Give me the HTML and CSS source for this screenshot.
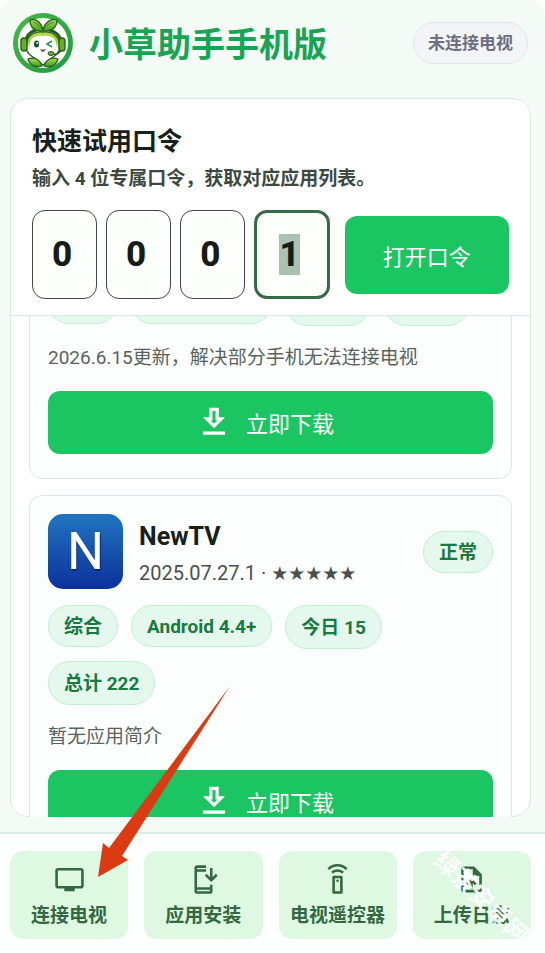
FILE: index.html
```html
<!DOCTYPE html>
<html lang="zh-CN">
<head>
<meta charset="utf-8">
<meta name="viewport" content="width=device-width, initial-scale=1">
<title>小草助手手机版</title>
<link rel="stylesheet" href="styles.css">
</head>
<body>
<svg class="defs" aria-hidden="true">
  <symbol id="download" viewBox="0 0 24 24"><path d="M19 9h-4V3H9v6H5l7 7 7-7zm-8 2V5h2v6h1.17L12 13.17 9.83 11H11zm-6 7h14v2H5z"/></symbol>
</svg>
<div class="app">
  <header class="header">
    <svg class="logo" viewBox="0 0 60 60" aria-hidden="true">
      <defs>
        <linearGradient id="ring" x1="0" y1="0" x2="1" y2="1"><stop offset="0" stop-color="#46b944"/><stop offset="1" stop-color="#219a45"/></linearGradient>
        <linearGradient id="leaf" x1="0" y1="0" x2="0" y2="1"><stop offset="0" stop-color="#a5e04a"/><stop offset="1" stop-color="#3f9b23"/></linearGradient>
        <linearGradient id="cap" x1="0" y1="0" x2="0" y2="1"><stop offset="0" stop-color="#b9dd4c"/><stop offset=".3" stop-color="#9ccb3b"/><stop offset=".5" stop-color="#fff"/></linearGradient>
      </defs>
      <circle cx="30" cy="30" r="27.5" fill="#fff" stroke="url(#ring)" stroke-width="5"/>
      <path d="M13 28C14 12 45 12 48 28" fill="none" stroke="#235f1c" stroke-width="3"/>
      <path d="M30 19c10-1 17 5 17 14 0 7-5 10-10 13-4 2-5 5-7 6-2-1-3-4-7-6-5-3-10-6-10-13 0-9 7-15 17-14z" fill="url(#cap)" stroke="#285f1d" stroke-width="1.3"/>
      <path d="M17 30c1-6 7-8 13-7 6-1 12 1 13 7 1 9-6 12-13 13-7-1-14-4-13-13z" fill="#fff"/>
      <path d="M30 18C29 9 22 5 17 7c0 8 5 12 13 11zM30 18C31 9 39 5 44 7c0 8-6 12-14 11z" fill="url(#leaf)" stroke="#285f1d" stroke-width="1.3"/>
      <path d="M20 9q7 2 10 9 3-7 11-9" fill="none" stroke="#39781c" stroke-width=".8"/>
      <rect x="8" y="25" width="6" height="13" rx="3" fill="#69ad2f" stroke="#285f1d" stroke-width="1.4"/>
      <rect x="46" y="25" width="6" height="13" rx="3" fill="#69ad2f" stroke="#285f1d" stroke-width="1.4"/>
      <path d="M48 37q-2 5-9 4" fill="none" stroke="#285f1d" stroke-width="1.5"/>
      <ellipse cx="38" cy="40.500" rx="3" ry="2" fill="#6fb02f" stroke="#285f1d"/>
      <ellipse cx="23.500" cy="31" rx="2.500" ry="3.500" fill="#194e2f"/><circle cx="24.200" cy="30" r=".9" fill="#fff"/>
      <path d="M39 28l-5 3 5 3" fill="none" stroke="#2a9a4c" stroke-width="1.6"/>
      <path d="M27 36q3 1 6 0-1 3-3 3t-3-3z" fill="#8a4a33"/>
      <path d="M29 53c-3-8-9-9-14-7 2 7 8 9 14 7zM31 53c3-8 9-9 14-7-2 7-8 9-14 7z" fill="url(#leaf)" stroke="#285f1d" stroke-width="1.3"/>
    </svg>
    <h1 class="title">小草助手手机版</h1>
    <span class="connection">未连接电视</span>
  </header>

  <main class="panel">
    <form class="code">
      <h2 class="code-title">快速试用口令</h2>
      <p class="code-hint">输入 4 位专属口令，获取对应应用列表。</p>
      <div class="code-row">
        <input class="digit" aria-label="口令第 1 位" value="0" maxlength="1">
        <input class="digit" aria-label="口令第 2 位" value="0" maxlength="1">
        <input class="digit" aria-label="口令第 3 位" value="0" maxlength="1">
        <input class="digit digit-active" aria-label="口令第 4 位" value="1" maxlength="1">
        <button class="open" type="button">打开口令</button>
      </div>
    </form>

    <div class="list">
      <article class="card card-scrolled">
        <div class="chips">
          <span class="chip">综合</span><span class="chip">Android 4.4+</span><span class="chip chip-count">今日 5</span><span class="chip chip-count">总计 5</span>
        </div>
        <p class="desc">2026.6.15更新，解决部分手机无法连接电视</p>
        <button class="download" type="button"><svg class="download-icon" aria-hidden="true"><use href="#download"/></svg>立即下载</button>
      </article>
      <article class="card">
        <div class="app-head">
          <div class="app-icon" aria-hidden="true">N</div>
          <div class="app-info">
            <h3 class="app-name">NewTV</h3>
            <p class="app-meta">2025.07.27.1 · <span class="stars">★★★★★</span></p>
          </div>
          <span class="chip">正常</span>
        </div>
        <div class="chips">
          <span class="chip">综合</span><span class="chip">Android 4.4+</span><span class="chip chip-count">今日 15</span><span class="chip chip-count">总计 222</span>
        </div>
        <p class="desc">暂无应用简介</p>
        <button class="download" type="button"><svg class="download-icon" aria-hidden="true"><use href="#download"/></svg>立即下载</button>
      </article>
    </div>
  </main>

  <nav class="nav">
    <button class="nav-item" type="button">
      <svg class="nav-icon" viewBox="0 0 24 24" aria-hidden="true"><path d="M21 3H3c-1.100 0-2 .9-2 2v12c0 1.100.9 2 2 2h5v2h8v-2h5c1.100 0 2-.9 2-2V5c0-1.100-.9-2-2-2zm0 14H3V5h18v12z"/></svg>
      连接电视
    </button>
    <button class="nav-item" type="button">
      <svg class="nav-icon" viewBox="0 0 24 24" aria-hidden="true"><path d="M17 18H7V6h7V1H7C5.900 1 5 1.900 5 3v18c0 1.100.9 2 2 2h10c1.100 0 2-.9 2-2v-5h-2v2zm0 3H7v-1h10v1zM7 3h7v1H7V3z"/><path d="M18 14l5-5-1.410-1.410L19 10.170V3h-2v7.170l-2.590-2.580L13 9z"/></svg>
      应用安装
    </button>
    <button class="nav-item" type="button">
      <svg class="nav-icon" viewBox="0 0 24 24" aria-hidden="true"><path d="M15 9H9c-.55 0-1 .45-1 1v12c0 .55.45 1 1 1h6c.55 0 1-.45 1-1V10c0-.55-.45-1-1-1zm-1 12h-4V11h4v10z"/><circle cx="12" cy="13" r="1"/><path d="M7.050 6.050l1.410 1.410C9.370 6.560 10.620 6 12 6s2.630.56 3.540 1.460l1.410-1.410C15.680 4.780 13.930 4 12 4s-3.680.78-4.950 2.050zM12 0C8.960 0 6.210 1.230 4.220 3.220l1.410 1.410C7.260 3.010 9.510 2 12 2s4.740 1.010 6.360 2.640l1.410-1.410C17.790 1.230 15.040 0 12 0z"/></svg>
      电视遥控器
    </button>
    <button class="nav-item" type="button">
      <svg class="nav-icon" viewBox="0 0 24 24" aria-hidden="true"><path d="M14 2H6c-1.100 0-2 .9-2 2v16c0 1.100.9 2 2 2h12c1.100 0 2-.9 2-2V8l-6-6zm4 18H6V4h7v5h5v11zM8 15l1.410 1.410L11 14.840V19h2v-4.160l1.590 1.590L16 15l-4-4z"/></svg>
      上传日志
    </button>
    <span class="watermark">绿茶安卓网</span>
  </nav>

  <svg class="arrow" viewBox="0 0 132 192" aria-hidden="true"><path d="M132 0L24 170l6 4L0 191 5 157l6 5z"/></svg>
</div>
</body>
</html>
```
FILE: styles.css
```css
* { box-sizing: border-box; }

body {
  margin: 0;
  background: #fbfefc;
  color: #17201a;
  font-family: Roboto, "Noto Sans CJK SC", sans-serif;
}

h1, h2, h3, p { margin: 0; }

button, input { font-family: inherit; margin: 0; }

.defs { position: absolute; width: 0; height: 0; }

.app {
  position: relative;
  display: flex;
  flex-direction: column;
  height: 100vh;
  overflow: hidden;
  border-radius: 16px 16px 0 0;
  background: #f4fbf7;
}

.header {
  display: flex;
  align-items: center;
  gap: 16px;
  padding: 13px 17px 25px 13px;
}

.logo { flex: none; width: 60px; height: 60px; }

.title {
  flex: 1;
  padding-top: 4px;
  color: #18a452;
  font-size: 34px;
  font-weight: 700;
  line-height: 44px;
}

.connection {
  padding: 1px 14px 0;
  border: 1px solid #e2e4ec;
  border-radius: 21px;
  background: #f3f4f8;
  color: #6c7080;
  font-size: 17px;
  font-weight: 700;
  line-height: 39px;
}

.panel {
  display: flex;
  flex: 1;
  flex-direction: column;
  min-height: 0;
  margin: 0 14px 15px 10px;
  border: 1px solid #d6ebe0;
  border-radius: 18px;
  background: #fff;
}

.code {
  padding: 26px 21px 16px;
  border-bottom: 1px solid #d6ebe0;
}

.code-title { font-size: 25px; font-weight: 700; line-height: 34px; }

.code-hint {
  margin: 7px 0 18px;
  color: #3c4840;
  font-size: 19px;
  font-weight: 700;
  line-height: 26px;
}

.code-row {
  display: grid;
  grid-template-columns: 65fr 65fr 65fr 75fr 170fr;
  align-items: center;
  gap: 9px;
}

.digit {
  width: 100%;
  height: 89px;
  padding: 0 5px 0 0;
  border: 1px solid #454746;
  border-radius: 13px;
  outline: 0;
  background: #fdfffd;
  color: #171c18;
  font-size: 35px;
  font-weight: 800;
  text-align: center;
}

.digit-active {
  border: 3px solid #376a47;
  background: linear-gradient(#a9c2b2, #a9c2b2) 22px center / 21px 41px no-repeat #fdfffd;
}

.open, .download {
  border: 0;
  border-radius: 12px;
  background: #1bc562;
  color: #fff;
  font-size: 22px;
}

.open { height: 78px; margin-left: 6px; padding: 0; }

.list {
  flex: 1;
  min-height: 0;
  margin-bottom: -1px;
  padding: 0 18px;
  overflow: hidden;
}

.card {
  margin-bottom: 16px;
  padding: 18px 18px 24px;
  border: 1px solid #d6ebe0;
  border-radius: 13px;
  background: #fcfefd;
}

.card-scrolled { margin-top: -53px; }

.app-head { display: flex; align-items: center; gap: 16px; margin-bottom: 16px; }

.app-icon {
  width: 75px;
  height: 75px;
  border-radius: 15px;
  background: linear-gradient(#2075bf, #0c319b);
  color: #fff;
  font-size: 52px;
  line-height: 75px;
  text-align: center;
  text-shadow: 1px 2px 1px #082879;
}

.app-info { flex: 1; padding-top: 3px; }

.app-name { font-size: 25px; font-weight: 700; line-height: 34px; }

.app-meta { margin-top: 6px; color: #4b504d; font-size: 20px; line-height: 26px; }

.stars { font-family: "DejaVu Sans", sans-serif; font-size: 19px; }

.chips { display: flex; flex-wrap: wrap; align-items: flex-start; gap: 12px 13px; }

.chip {
  padding: 2px 15px 0;
  border: 1px solid #c1f0d3;
  border-radius: 22px;
  background: #e4f8ed;
  color: #187a3e;
  font-size: 19px;
  font-weight: 700;
  line-height: 38px;
}

.chip-count { line-height: 40px; }

.desc { margin: 18px 0 19px; color: #59635d; font-size: 19px; line-height: 28px; }

.download {
  display: flex;
  align-items: center;
  justify-content: center;
  gap: 13px;
  width: 100%;
  height: 63px;
  padding: 0 12px 2px 0;
}

.download-icon { width: 38px; height: 38px; fill: currentColor; }

.nav {
  position: relative;
  display: grid;
  grid-template-columns: repeat(4, 1fr);
  gap: 16px;
  padding: 17px 14px 14px 10px;
  border-top: 2px solid #d9eee3;
  background: #fdfffe;
}

.nav-item {
  display: flex;
  flex-direction: column;
  align-items: center;
  gap: 7px;
  height: 88px;
  padding: 13px 0 0;
  border: 0;
  border-radius: 13px;
  background: #def8e2;
  color: #346842;
  font-size: 19px;
  font-weight: 700;
  line-height: 28px;
  white-space: nowrap;
}

.nav-icon { width: 31px; height: 31px; fill: currentColor; }

.watermark {
  position: absolute;
  right: 4px;
  bottom: 42px;
  color: #fff;
  font-size: 24px;
  font-weight: 700;
  line-height: 26px;
  opacity: 0.9;
  pointer-events: none;
  transform: rotate(44deg);
}

.arrow {
  position: absolute;
  bottom: 75px;
  left: 98px;
  width: 132px;
  height: 192px;
  fill: #dc3a13;
  pointer-events: none;
}
```
